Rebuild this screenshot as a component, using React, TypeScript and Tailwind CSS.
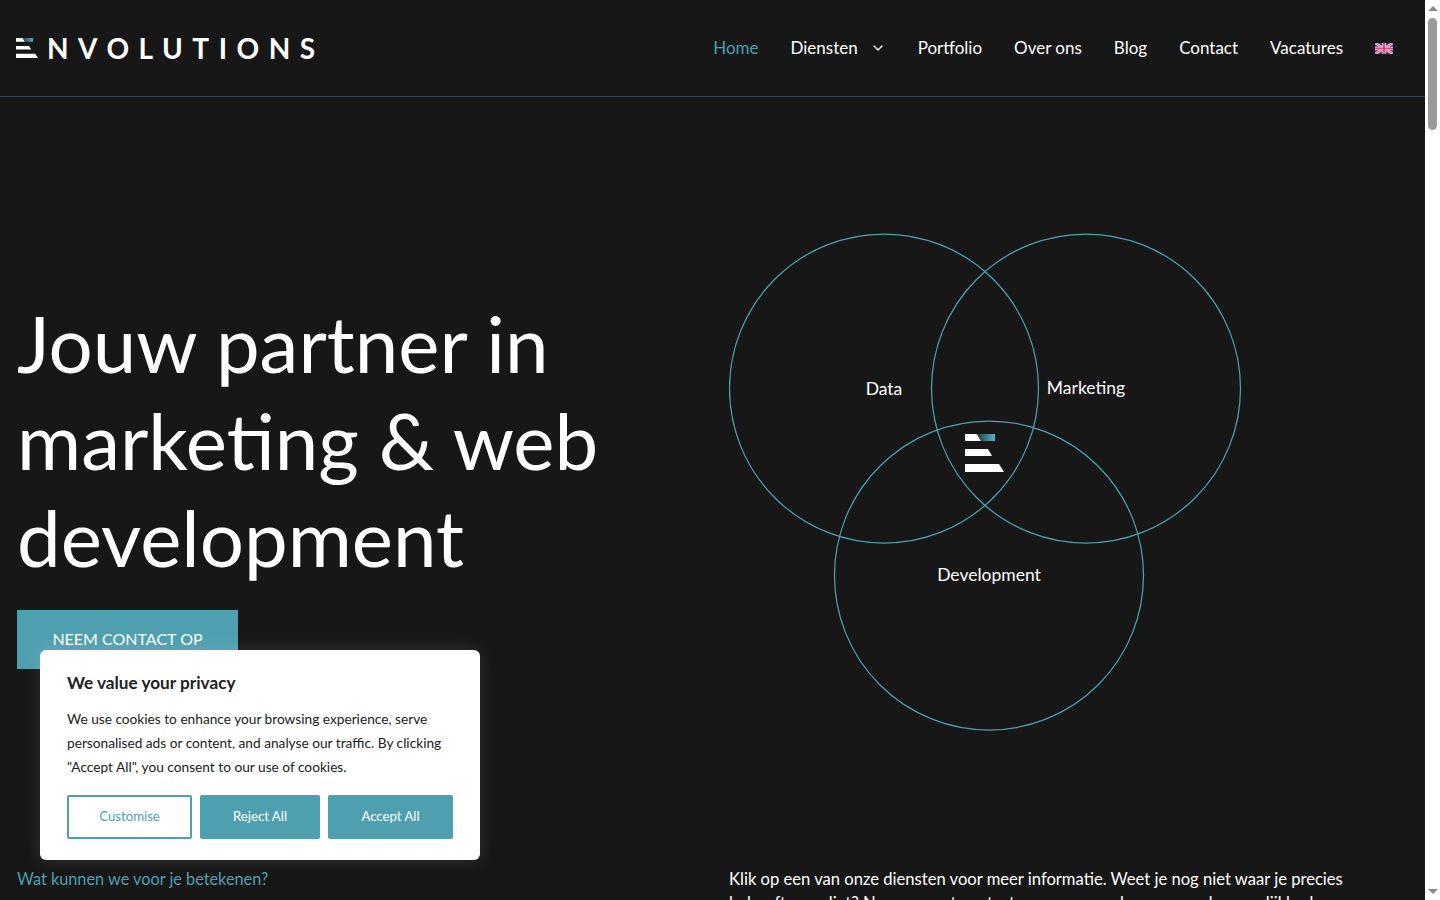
import { ChevronDown } from "lucide-react"

const nav = ["Portfolio", "Over ons", "Blog", "Contact", "Vacatures"]

function Mark({ id, className }: { id: string; className: string }) {
  return (
    <svg viewBox="0 0 39 38" preserveAspectRatio="none" className={className}>
      <defs>
        <linearGradient id={id} x1="0" x2="1" y1="0" y2="0">
          <stop offset="0" stopColor="#1d3f4a" />
          <stop offset="1" stopColor="#5bb0c2" />
        </linearGradient>
      </defs>
      <polygon points="0,0 12,0 16,7 0,7" fill="#fff" />
      <polygon points="12,0 30,0 30,7 16,7" fill={`url(#${id})`} />
      <polygon points="0,15 23,15 27,22 0,22" fill="#fff" />
      <polygon points="0,30 34,30 39,38 0,38" fill="#fff" />
    </svg>
  )
}

function Venn() {
  return (
    <svg viewBox="0 0 514 500" className="w-[514px] h-[500px]" fill="none">
      <circle cx="155" cy="155.5" r="154.5" stroke="#4e9fb0" strokeWidth="1.25" />
      <circle cx="357" cy="155.5" r="154.5" stroke="#4e9fb0" strokeWidth="1.25" />
      <circle cx="260" cy="342.5" r="154.5" stroke="#4e9fb0" strokeWidth="1.25" />
      <g fill="#fff" fontSize="17.5" textAnchor="middle">
        <text x="155" y="162">Data</text>
        <text x="357" y="161">Marketing</text>
        <text x="260" y="348">Development</text>
      </g>
      <svg x="236" y="201" width="39" height="38" viewBox="0 0 39 38">
        <defs>
          <linearGradient id="venn-bar" x1="0" x2="1" y1="0" y2="0">
            <stop offset="0" stopColor="#1d3f4a" />
            <stop offset="1" stopColor="#5bb0c2" />
          </linearGradient>
        </defs>
        <polygon points="0,0 12,0 16,7 0,7" fill="#fff" />
        <polygon points="12,0 30,0 30,7 16,7" fill="url(#venn-bar)" />
        <polygon points="0,15 23,15 27,22 0,22" fill="#fff" />
        <polygon points="0,30 34,30 39,38 0,38" fill="#fff" />
      </svg>
    </svg>
  )
}

function UkFlag() {
  return (
    <svg viewBox="0 0 18 11" className="w-[18px] h-[11px]">
      <rect width="18" height="11" fill="#3a3f8f" />
      <path d="M0 0L18 11M18 0L0 11" stroke="#e8d4e0" strokeWidth="2.4" />
      <path d="M0 0L18 11M18 0L0 11" stroke="#e0506f" strokeWidth="0.9" />
      <path d="M9 0V11M0 5.5H18" stroke="#f2dce6" strokeWidth="3.6" />
      <path d="M9 0V11M0 5.5H18" stroke="#e8476c" strokeWidth="2" />
    </svg>
  )
}

export default function App() {
  return (
    <div className="relative flex h-screen overflow-hidden bg-white font-['Lato',sans-serif]">
      <div className="w-[1425px] h-full overflow-hidden bg-[#171717] text-white">
        <header className="h-[97px] flex items-center justify-between border-b border-[#2c4650] pl-4 pr-[32px]">
          <a className="flex items-center gap-[9px]">
            <Mark id="head-bar" className="w-[22px] h-[20px]" />
            <span className="text-[28px] leading-none font-bold tracking-[0.34em] text-white">NVOLUTIONS</span>
          </a>
          <nav className="flex items-center gap-8 text-[17px] leading-none">
            <a className="pb-[2px] text-[#4e9fb0]">Home</a>
            <a className="flex items-center gap-[12px]">
              <span className="pb-[2px]">Diensten</span>
              <ChevronDown size={16} strokeWidth={2} />
            </a>
            {nav.map((item) => (
              <a key={item} className="pb-[2px]">{item}</a>
            ))}
            <UkFlag />
          </nav>
        </header>

        <main className="flex">
          <section className="w-[729px] pl-[17px] pt-[198px]">
            <h1 className="text-[78px] leading-[97px] font-normal w-[690px]">
              Jouw partner in marketing &amp; web development
            </h1>
            <a className="mt-[24px] pb-[2px] w-[221px] h-[59px] flex items-center justify-center bg-[#4e9fb0] text-[16px] text-white">
              NEEM CONTACT OP
            </a>
            <p className="mt-[198px] text-[16.3px] leading-[24px] text-[#4e9fb0]">Wat kunnen we voor je betekenen?</p>
          </section>

          <section className="flex-1">
            <div className="pt-[136px]">
              <Venn />
            </div>
            <p className="mt-[134px] w-[650px] text-[16.6px] leading-[24px]">
              Klik op een van onze diensten voor meer informatie. Weet je nog niet waar je precies behoefte aan ligt? Neem gerust contact op, samen verkennen we de mogelijkheden en bedenken we een plan.
            </p>
          </section>
        </main>
      </div>

      <div className="relative w-[15px] h-full flex flex-col items-center justify-between bg-white py-[6px]">
        <div className="w-0 h-0 border-x-[5px] border-x-transparent border-b-[5px] border-b-[#8a8a8a]" />
        <div className="absolute top-[18px] left-[3px] w-[9px] h-[112px] rounded-full bg-[#9a9a9a]" />
        <div className="w-0 h-0 border-x-[5px] border-x-transparent border-t-[5px] border-t-[#8a8a8a]" />
      </div>

      <div className="absolute left-[40px] top-[650px] w-[440px] h-[210px] rounded-[6px] bg-white px-[27px] pt-[20px] shadow-[0_0_18px_rgba(255,255,255,0.12)]">
        <h2 className="text-[17.2px] leading-[26px] font-bold text-[#212121]">We value your privacy</h2>
        <p className="mt-[11px] text-[13.7px] leading-[24px] text-[#212121]">
          We use cookies to enhance your browsing experience, serve personalised ads or content, and analyse our traffic. By clicking "Accept All", you consent to our use of cookies.
        </p>
        <div className="mt-[16px] flex gap-2 text-[13.2px]">
          <button className="w-[125px] h-[44px] rounded-[2px] border-2 border-[#4e9fb0] text-[#4e9fb0]">Customise</button>
          <button className="w-[120px] h-[44px] rounded-[2px] bg-[#4e9fb0] text-white">Reject All</button>
          <button className="w-[125px] h-[44px] rounded-[2px] bg-[#4e9fb0] text-white">Accept All</button>
        </div>
      </div>
    </div>
  )
}
